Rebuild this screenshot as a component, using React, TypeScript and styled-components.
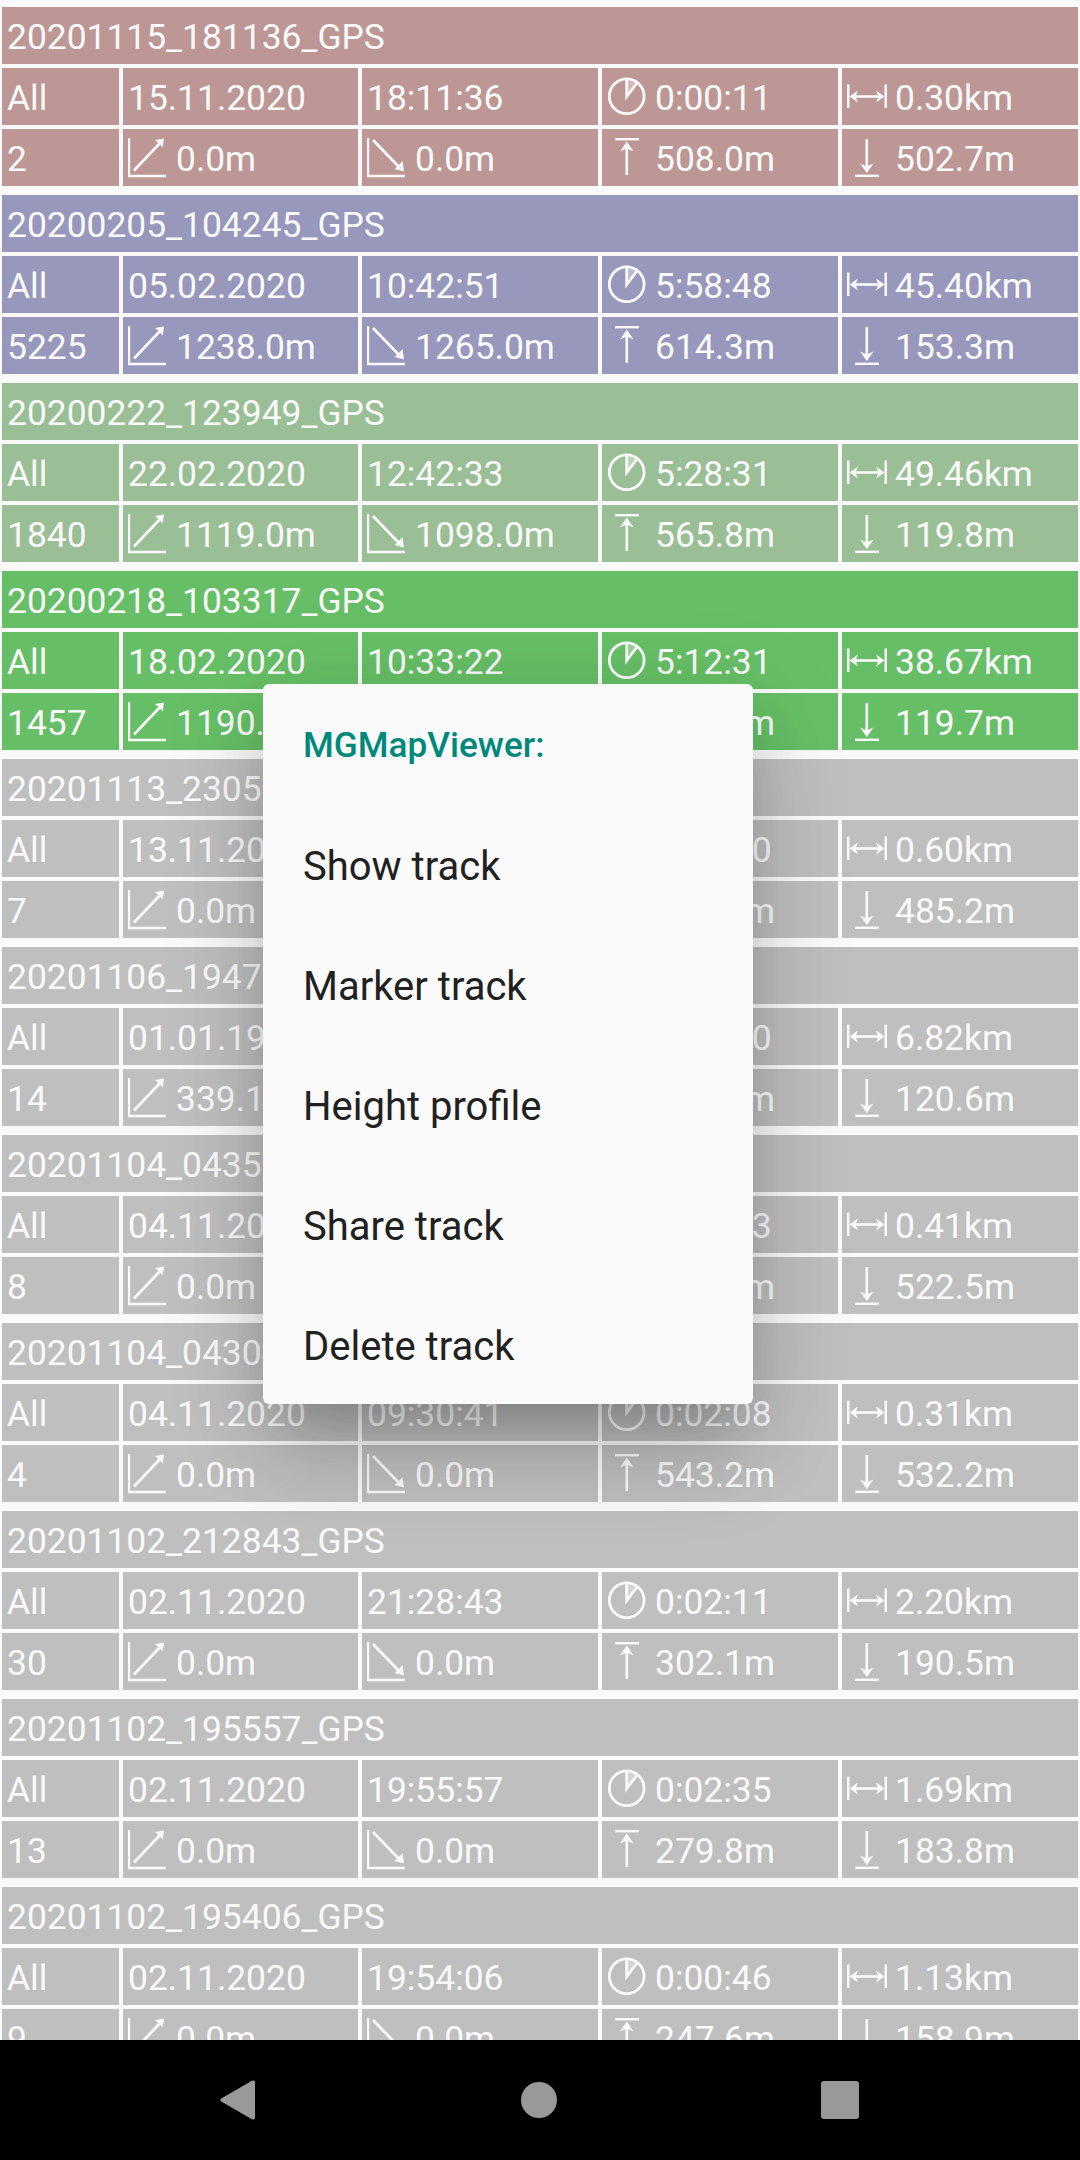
import React from "react";
import styled, { createGlobalStyle } from "styled-components";

const Global = createGlobalStyle`
  html, body { margin: 0; padding: 0; background: #fafafa; }
  * { box-sizing: border-box; }
`;

const Screen = styled.div`
  position: relative;
  width: 1080px;
  height: 2160px;
  display: flex;
  flex-direction: column;
  overflow: hidden;
  background: #fafafa;
  font-family: Roboto, "Liberation Sans", sans-serif;
`;

const TrackList = styled.div`
  flex: 1;
  min-height: 0;
  overflow: hidden;
  padding: 7px 2px 0;
  display: flex;
  flex-direction: column;
  gap: 9px;
`;

const Card = styled.section<{ $tone: string }>`
  --tone: ${(p) => p.$tone};
  flex: none;
  display: flex;
  flex-direction: column;
  gap: 4px;
`;

const TitleBar = styled.div`
  height: 57px;
  display: flex;
  align-items: center;
  padding: 2px 0 0 5px;
  background: var(--tone);
  color: #fafafa;
  font-size: 35.4px;
  white-space: nowrap;
`;

const StatRow = styled.div`
  display: grid;
  grid-template-columns: 117px 235px 236px 236px 236px;
  gap: 4px;
`;

const Cell = styled.div`
  height: 57px;
  display: flex;
  align-items: center;
  gap: 8px;
  padding-left: 5px;
  background: var(--tone);
  color: #fafafa;
  font-size: 35.4px;
  white-space: nowrap;
  overflow: hidden;
`;

const Value = styled.span`
  padding-top: 2px;
`;

const Glyph = styled.svg.attrs({ viewBox: "0 0 40 40", width: 40, height: 40 })`
  flex: none;
  fill: none;
  stroke: #fafafa;
  stroke-width: 2.4;
`;

const Head = styled.polygon`
  fill: #fafafa;
  stroke: none;
`;

const SlopeUp = () => (
  <Glyph>
    <path d="M1 0V38H38" />
    <path d="M6 32.5L33 4" strokeWidth="2.8" />
    <Head points="36,0.5 34.7,9.5 31.5,6 27,2" />
  </Glyph>
);

const SlopeDown = () => (
  <Glyph>
    <path d="M1 0V38H38" />
    <path d="M6 2L33 30" strokeWidth="2.8" />
    <Head points="37,33.5 27.5,31 31,28 35.5,23" />
  </Glyph>
);

const Clock = () => (
  <Glyph>
    <path d="M19.7 19.5V2.2L30 6Z" fill="#fafafa" fillOpacity=".35" stroke="none" />
    <circle cx="19.7" cy="19.2" r="17.4" strokeWidth="2.8" />
    <path d="M19.7 2.2V19.5L30 6" strokeWidth="2.8" />
  </Glyph>
);

const Ascent = () => (
  <Glyph>
    <path d="M8 1.2H32" />
    <path d="M19.8 8V37" strokeWidth="2.6" />
    <Head points="19.8,3.5 26.5,13.5 19.8,10.5 13,13.5" />
  </Glyph>
);

const Descent = () => (
  <Glyph>
    <path d="M8 37.8H32" />
    <path d="M19.8 1V30" strokeWidth="2.6" />
    <Head points="19.8,35 26.5,25.5 19.8,28.5 13,25.5" />
  </Glyph>
);

const Distance = () => (
  <Glyph>
    <path d="M1.2 7.5V31M38.8 7.5V31" strokeWidth="2.6" />
    <path d="M6 19.5H34" strokeWidth="2.6" />
    <Head points="2.5,19.5 11,13.5 8.5,19.5 11,25.5" />
    <Head points="37.5,19.5 29,13.5 31.5,19.5 29,25.5" />
  </Glyph>
);

const NavBar = styled.nav`
  flex: none;
  height: 120px;
  background: #000;
  display: flex;
  align-items: center;
  justify-content: center;
  gap: 261.5px;
  padding-right: 3px;
`;

const NavGlyph = styled.svg.attrs({ viewBox: "0 0 40 40", width: 40, height: 40 })`
  fill: #999;
`;

const Dialog = styled.div`
  position: absolute;
  left: 263px;
  top: 684px;
  width: 490px;
  height: 720px;
  background: #fafafa;
  border-radius: 6px;
  box-shadow: 0 60px 90px 0 rgba(0, 0, 0, 0.12), 0 20px 100px 10px rgba(0, 0, 0, 0.1),
    0 33px 45px -21px rgba(0, 0, 0, 0.18);
  display: flex;
  flex-direction: column;
`;

const DialogTitle = styled.div`
  height: 120px;
  display: flex;
  align-items: center;
  padding: 2px 0 0 40px;
  color: #00897b;
  font-size: 35.2px;
  font-weight: 500;
`;

const DialogItem = styled.div`
  height: 120px;
  display: flex;
  align-items: center;
  padding: 4px 0 0 40px;
  color: #212121;
  font-size: 40px;
`;

type Track = {
  name: string; tone: string; count: string; date: string; time: string; dur: string; dist: string;
  up: string; down: string; max: string; min: string;
};

const PINK = "#bc9795", BLUE = "#9897bc", SAGE = "#9abf96", GREEN = "#66bf66", GRAY = "#bfbfbf";

const tracks: Track[] = [
  { name: "20201115_181136_GPS", tone: PINK, date: "15.11.2020", time: "18:11:36", dur: "0:00:11", dist: "0.30km", count: "2", up: "0.0m", down: "0.0m", max: "508.0m", min: "502.7m" },
  { name: "20200205_104245_GPS", tone: BLUE, date: "05.02.2020", time: "10:42:51", dur: "5:58:48", dist: "45.40km", count: "5225", up: "1238.0m", down: "1265.0m", max: "614.3m", min: "153.3m" },
  { name: "20200222_123949_GPS", tone: SAGE, date: "22.02.2020", time: "12:42:33", dur: "5:28:31", dist: "49.46km", count: "1840", up: "1119.0m", down: "1098.0m", max: "565.8m", min: "119.8m" },
  { name: "20200218_103317_GPS", tone: GREEN, date: "18.02.2020", time: "10:33:22", dur: "5:12:31", dist: "38.67km", count: "1457", up: "1190.0m", down: "1178.0m", max: "559.4m", min: "119.7m" },
  { name: "20201113_230510_GPS", tone: GRAY, date: "13.11.2020", time: "23:05:10", dur: "0:03:30", dist: "0.60km", count: "7", up: "0.0m", down: "0.0m", max: "497.3m", min: "485.2m" },
  { name: "20201106_194702_GPS", tone: GRAY, date: "01.01.1970", time: "01:00:00", dur: "1:12:40", dist: "6.82km", count: "14", up: "339.1m", down: "330.2m", max: "459.7m", min: "120.6m" },
  { name: "20201104_043512_GPS", tone: GRAY, date: "04.11.2020", time: "09:35:12", dur: "0:02:43", dist: "0.41km", count: "8", up: "0.0m", down: "0.0m", max: "531.8m", min: "522.5m" },
  { name: "20201104_043041_GPS", tone: GRAY, date: "04.11.2020", time: "09:30:41", dur: "0:02:08", dist: "0.31km", count: "4", up: "0.0m", down: "0.0m", max: "543.2m", min: "532.2m" },
  { name: "20201102_212843_GPS", tone: GRAY, date: "02.11.2020", time: "21:28:43", dur: "0:02:11", dist: "2.20km", count: "30", up: "0.0m", down: "0.0m", max: "302.1m", min: "190.5m" },
  { name: "20201102_195557_GPS", tone: GRAY, date: "02.11.2020", time: "19:55:57", dur: "0:02:35", dist: "1.69km", count: "13", up: "0.0m", down: "0.0m", max: "279.8m", min: "183.8m" },
  { name: "20201102_195406_GPS", tone: GRAY, date: "02.11.2020", time: "19:54:06", dur: "0:00:46", dist: "1.13km", count: "9", up: "0.0m", down: "0.0m", max: "247.6m", min: "158.9m" },
];

const menu = ["Show track", "Marker track", "Height profile", "Share track", "Delete track"];

export default function App() {
  return (
    <Screen>
      <Global />
      <TrackList>
        {tracks.map((t) => (
          <Card key={t.name} $tone={t.tone}>
            <TitleBar>{t.name}</TitleBar>
            <StatRow>
              <Cell><Value>All</Value></Cell>
              <Cell><Value>{t.date}</Value></Cell>
              <Cell><Value>{t.time}</Value></Cell>
              <Cell><Clock /><Value>{t.dur}</Value></Cell>
              <Cell><Distance /><Value>{t.dist}</Value></Cell>
            </StatRow>
            <StatRow>
              <Cell><Value>{t.count}</Value></Cell>
              <Cell><SlopeUp /><Value>{t.up}</Value></Cell>
              <Cell><SlopeDown /><Value>{t.down}</Value></Cell>
              <Cell><Ascent /><Value>{t.max}</Value></Cell>
              <Cell><Descent /><Value>{t.min}</Value></Cell>
            </StatRow>
          </Card>
        ))}
      </TrackList>
      <NavBar>
        <NavGlyph><path d="M38 2.5V37.5Q38 40.5 35 39.2L4.2 21.5Q2.5 20 4.2 18.5L35 .8Q38 -.5 38 2.5Z" /></NavGlyph>
        <NavGlyph><circle cx="20" cy="20" r="18" /></NavGlyph>
        <NavGlyph><rect x="1" y="1" width="38" height="38" rx="3" /></NavGlyph>
      </NavBar>
      <Dialog>
        <DialogTitle>MGMapViewer:</DialogTitle>
        {menu.map((m) => (
          <DialogItem key={m}>{m}</DialogItem>
        ))}
      </Dialog>
    </Screen>
  );
}
